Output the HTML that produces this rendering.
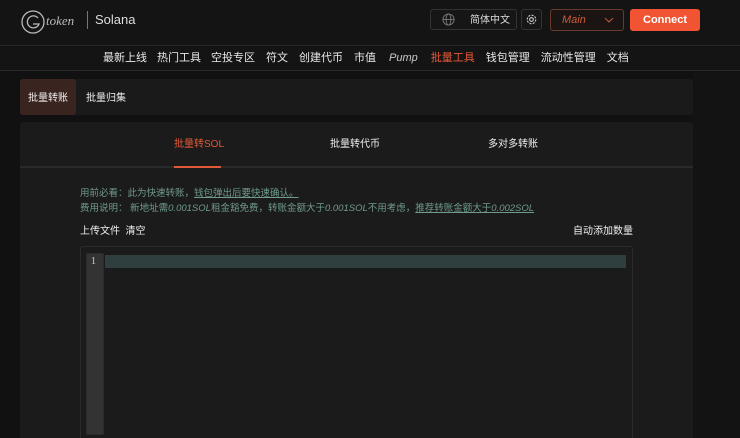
<!DOCTYPE html>
<html><head><meta charset="utf-8"><style>
*{margin:0;padding:0;box-sizing:border-box}
html,body{width:740px;height:438px;overflow:hidden}
body{background:#111;font-family:"Liberation Sans","Noto Sans CJK SC",sans-serif;color:#e8e8e8;position:relative;line-height:1.2}
.a{position:absolute}
.c{display:flex;align-items:center;justify-content:center;padding-top:3px}
</style></head><body>
<div class="a" style="left:0;top:0;width:740px;height:46px;background:#141414;border-bottom:1px solid #2a2a2a"></div>
<svg class="a" style="left:20px;top:8px" width="28" height="28" viewBox="0 0 28 28"><circle cx="13" cy="14" r="11" fill="none" stroke="#bbb" stroke-width="1.3"/><path d="M18 10a6 6 0 1 0 1 6h-6" fill="none" stroke="#bbb" stroke-width="1.3"/></svg>
<div class="a" style="left:46px;top:13px;font:italic 13px 'Liberation Serif',serif;color:#bbb">token</div>
<div class="a" style="left:87px;top:11px;width:1px;height:18px;background:#777"></div>
<div class="a" style="left:95px;top:12px;font-size:13px;color:#ddd">Solana</div>
<div class="a" style="left:430px;top:9px;width:87px;height:21px;border:1px solid #333;border-radius:3px;background:#161616"></div>
<svg class="a" style="left:442px;top:13px" width="13" height="13" viewBox="0 0 14 14" fill="none" stroke="#777" stroke-width="1"><circle cx="7" cy="7" r="6"/><ellipse cx="7" cy="7" rx="2.6" ry="6"/><path d="M1 7h12"/></svg>
<div class="a c" style="left:464px;top:9px;width:52px;height:21px;font-size:10px;color:#ddd">简体中文</div>
<div class="a" style="left:521px;top:9px;width:21px;height:21px;border:1px solid #333;border-radius:3px;background:#161616"></div>
<svg class="a" style="left:525px;top:13px" width="13" height="13" viewBox="0 0 14 14" fill="none" stroke="#ccc" stroke-width="1.2"><circle cx="7" cy="7" r="2"/><circle cx="7" cy="7" r="4.6" stroke-dasharray="2.2 1.4"/></svg>
<div class="a" style="left:550px;top:9px;width:74px;height:22px;border:1px solid #6a3a2c;border-radius:3px;background:#1a1412"></div>
<div class="a" style="left:562px;top:13px;font:italic 11px 'Liberation Sans',sans-serif;color:#d05a3a;line-height:14px">Main</div>
<svg class="a" style="left:604px;top:17px" width="10" height="6" viewBox="0 0 10 6"><path d="M1 1l4 4 4-4" fill="none" stroke="#c05a40" stroke-width="1"/></svg>
<div class="a" style="left:630px;top:9px;width:70px;height:22px;background:#f05432;border-radius:3px;font-weight:bold;font-size:11px;color:#fff;text-align:center;line-height:22px">Connect</div>
<div class="a" style="left:0;top:47px;width:740px;height:24px;background:#141414;border-bottom:1px solid #2a2a2a"></div>
<div class="a" style="left:103px;top:47px;height:24px;display:flex;align-items:center;font-size:11px;color:#e8e8e8;white-space:nowrap">
<span style="margin-right:10px">最新上线</span><span style="margin-right:10px">热门工具</span><span style="margin-right:11px">空投专区</span><span style="margin-right:11px">符文</span><span style="margin-right:11px">创建代币</span><span style="margin-right:13px">市值</span><span style="margin-right:13px;font-style:italic;color:#ccc">Pump</span><span style="margin-right:11px;color:#e85838">批量工具</span><span style="margin-right:11px">钱包管理</span><span style="margin-right:11px">流动性管理</span><span>文档</span></div>
<div class="a" style="left:693px;top:72px;width:47px;height:366px;background:#131313"></div>
<div class="a" style="left:20px;top:79px;width:673px;height:36px;background:#1a1a1a;border-radius:3px"></div>
<div class="a c" style="left:20px;top:79px;width:56px;height:36px;background:#3a2420;border-radius:3px;font-size:10px;color:#eee">批量转账</div>
<div class="a c" style="left:86px;top:79px;height:36px;font-size:10px;color:#eee">批量归集</div>
<div class="a" style="left:20px;top:122px;width:673px;height:316px;background:#1b1b1b;border-radius:3px 3px 0 0"></div>
<div class="a" style="left:20px;top:166px;width:673px;height:2px;background:#2a2a2a"></div>
<div class="a" style="left:174px;top:166px;width:47px;height:2px;background:#e05a3a"></div>
<div class="a c" style="left:174px;top:134px;height:18px;font-size:10px;color:#e05a3a">批量转SOL</div>
<div class="a c" style="left:330px;top:134px;height:18px;font-size:10px;color:#eee">批量转代币</div>
<div class="a c" style="left:488px;top:134px;height:18px;font-size:10px;color:#eee">多对多转账</div>
<div class="a" style="left:80px;top:188px;font-size:9.5px;color:#6f9a8e;white-space:nowrap">用前必看：此为快速转账，<span style="text-decoration:underline">钱包弹出后要快速确认。</span></div>
<div class="a" style="left:80px;top:203px;font-size:9.5px;color:#6f9a8e;white-space:nowrap">费用说明： 新地址需<i>0.001SOL</i>租金豁免费，转账金额大于<i>0.001SOL</i>不用考虑，<span style="text-decoration:underline">推荐转账金额大于<i>0.002SOL</i></span></div>
<div class="a" style="left:80px;top:226px;font-size:10px;color:#eee">上传文件&nbsp; 清空</div>
<div class="a" style="left:573px;top:226px;font-size:10px;color:#eee">自动添加数量</div>
<div class="a" style="left:80px;top:246px;width:553px;height:192px;border:1px solid #2c2c2c;border-bottom:none;border-radius:3px 3px 0 0;background:#1b1b1b"></div>
<div class="a" style="left:86px;top:253px;width:18px;height:182px;background:#333;border:1px solid #2a2a2a"></div>
<div class="a" style="left:91px;top:256px;font:10px 'Liberation Serif',serif;color:#ccc">1</div>
<div class="a" style="left:105px;top:255px;width:521px;height:13px;background:#2f3e3e"></div>
</body></html>
